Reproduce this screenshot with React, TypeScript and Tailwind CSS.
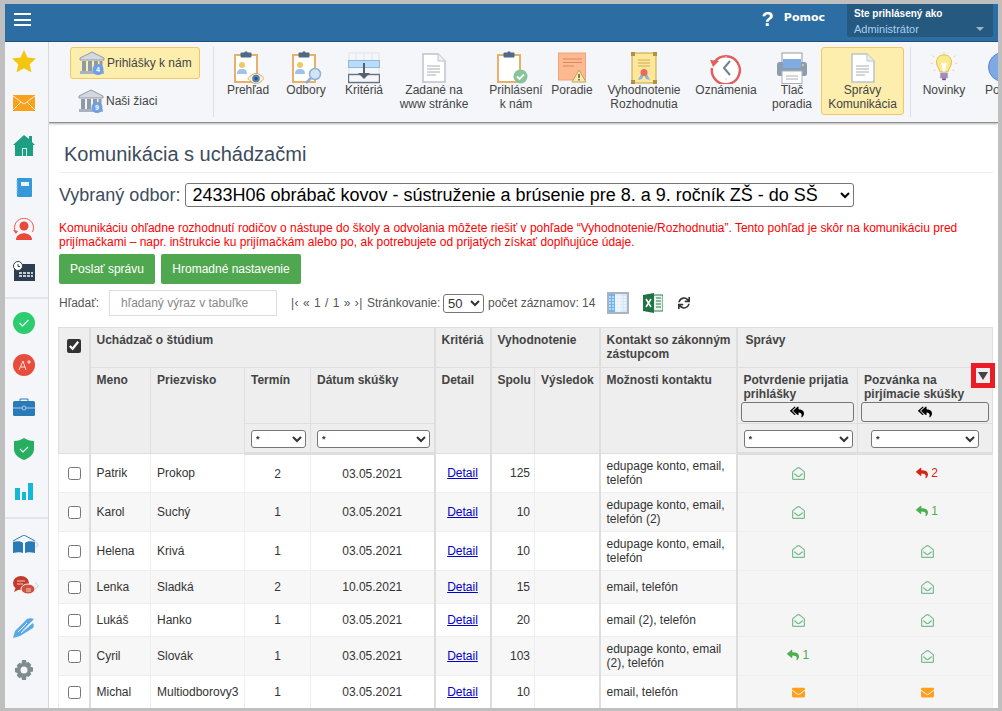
import type { ReactNode } from "react";
import { FaEnvelope, FaRegEnvelopeOpen, FaReply, FaReplyAll, FaSync } from "react-icons/fa";

function Clipboard({ children }: { children?: ReactNode }) {
  return (
    <>
      <rect x="3" y="4" width="22" height="27" fill="#fff" stroke="#e9b06a" strokeWidth="2" />
      <rect x="8.500" y="1.500" width="11" height="5" rx="1" fill="#4f6a85" />
      <circle cx="14" cy="1.800" r="1.600" fill="#4f6a85" />
      {children}
    </>
  );
}

function Person() {
  return (
    <>
      <circle cx="10" cy="14" r="3" fill="#f3c766" />
      <path d="M5 23c0-4 2-5 5-5s5 1 5 5z" fill="#9dc3ec" />
    </>
  );
}

function Prehlad() {
  return (
    <svg width="32" height="33" viewBox="0 0 32 33">
      <Clipboard><Person /></Clipboard>
      <path d="M16 27.500c3-3.500 5-5 8-5s5 1.500 8 5c-3 3.500-5 5-8 5s-5-1.500-8-5z" fill="#fdf2d8" stroke="#d9a860" />
      <circle cx="24" cy="27.500" r="3.800" fill="#4d7fb8" />
      <circle cx="24" cy="27.500" r="1.500" fill="#234d7a" />
    </svg>
  );
}

function Odbory() {
  return (
    <svg width="32" height="33" viewBox="0 0 32 33">
      <Clipboard><Person /></Clipboard>
      <circle cx="25" cy="23" r="5.500" fill="#cfe4f7" stroke="#8fb0cf" strokeWidth="1.500" />
      <path d="M21 27l-5 5" stroke="#8fb0cf" strokeWidth="2.500" />
    </svg>
  );
}

function Kriteria() {
  return (
    <svg width="32" height="32" viewBox="0 0 32 32">
      <rect x="1" y="1" width="30" height="30" fill="#f4f6f9" stroke="#dfe3e8" />
      <path d="M8 1v7M16 1v7M24 1v7" stroke="#dfe3e8" />
      <rect x="0.500" y="8.500" width="31" height="7" fill="#b9dcf8" stroke="#8db8d8" />
      <rect x="0.500" y="22.500" width="31" height="8" fill="#f4f6f9" stroke="#66727e" strokeWidth="1.400" />
      <path d="M16 11v13" stroke="#55616d" strokeWidth="2" />
      <path d="M10 21h12l-6 6z" fill="#55616d" />
    </svg>
  );
}

function Doc() {
  return (
    <svg width="24" height="30" viewBox="0 0 24 30">
      <path d="M1 1h15l7 7v21H1z" fill="#fff" stroke="#bcc3ca" strokeWidth="1.500" />
      <path d="M16 1v7h7" fill="#eef0f2" stroke="#bcc3ca" />
      <path d="M5 13h13M5 16h13M5 19h13M5 22h9" stroke="#a6aeb6" />
    </svg>
  );
}

function Prihlaseni() {
  return (
    <svg width="42" height="33" viewBox="0 0 42 33">
      <Clipboard />
      <circle cx="25.500" cy="25.500" r="7" fill="#87c49a" />
      <path d="M22 25.500l2.500 2.500 4.500-4.500" fill="none" stroke="#fff" strokeWidth="1.800" />
    </svg>
  );
}

function Poradie() {
  return (
    <svg width="29" height="31" viewBox="0 0 29 31">
      <rect x="0.500" y="1" width="27" height="27" fill="#fdb98f" stroke="#eca57c" />
      <path d="M5 7h19M5 10.500h19M5 14h11" stroke="#d98a5c" strokeWidth="1.200" />
      <path d="M21 18l7 12H14z" fill="#fde9a8" stroke="#bfa25a" />
      <path d="M21 22v4M21 27v1.500" stroke="#444" strokeWidth="1.400" />
    </svg>
  );
}

function Diploma() {
  return (
    <svg width="26" height="32" viewBox="0 0 26 32">
      <rect x="1" y="1" width="24" height="30" fill="#fde79b" stroke="#c4a24a" />
      <path d="M0 0h4v4H0zM22 0h4v4h-4zM0 28h4v4H0zM22 28h4v4h-4z" fill="#b3923f" />
      <path d="M7 8h12M7 11h12M7 14h12" stroke="#cfae55" strokeWidth="1.200" />
      <path d="M10 22l-3 6 4-1 2-4 2 4 4 1-3-6z" fill="#8fb5dc" />
      <circle cx="13" cy="20.500" r="3.500" fill="#e66a5e" />
    </svg>
  );
}

function ClockBack() {
  return (
    <svg width="32" height="32" viewBox="0 0 32 32">
      <path d="M4.500 10A14 14 0 1 1 2 16" fill="#fff" stroke="#e25f5f" strokeWidth="2.500" />
      <path d="M0 8l9 1-6 6z" fill="#e25f5f" />
      <path d="M20 9l-6 7 6 7" fill="none" stroke="#6d8197" strokeWidth="2" />
      <path d="M16 4v2M16 26v2M27 16h2" stroke="#c6ced6" />
    </svg>
  );
}

function Printer() {
  return (
    <svg width="32" height="32" viewBox="0 0 32 32">
      <rect x="6" y="1" width="20" height="16" fill="#fff" stroke="#a9b2bb" strokeWidth="1.300" />
      <rect x="1" y="10" width="30" height="14" rx="2.500" fill="#8d9db0" />
      <rect x="7" y="7" width="18" height="9" fill="#80ace4" />
      <circle cx="27" cy="13" r="1" fill="#f3d27a" />
      <rect x="6" y="19" width="20" height="12.500" fill="#fff" stroke="#a9b2bb" />
      <path d="M10 24h12M10 27h12" stroke="#a9b2bb" />
    </svg>
  );
}

function Bulb() {
  return (
    <svg width="28" height="31" viewBox="0 0 28 33">
      <path d="M14 3c-5 0-8 3.500-8 8 0 4 3 6 3.500 10h9c.5-4 3.500-6 3.500-10 0-4.500-3-8-8-8z" fill="#fbe98a" stroke="#dcb94f" />
      <path d="M11 12c1-2 2 1 3 0s2-2 3 0l-2 9h-2z" fill="#fff" />
      <rect x="10" y="22" width="8" height="6" fill="#a48bb8" />
      <rect x="12" y="28" width="4" height="2" fill="#6c5a80" />
      <path d="M14 0v1.500M2 4l2 1.500M26 4l-2 1.500M0 12h2M26 12h2M3 20l2-1M25 20l-2-1" stroke="#ecd27a" />
    </svg>
  );
}

function Bank({ n }: { n: number }) {
  return (
    <svg width="26" height="25" viewBox="0 0 26 25">
      <path d="M1 7l12-6 12 6v2H1z" fill="#d3d9e0" stroke="#8e9aa8" />
      <path d="M3 10h4v10H3zM9 10h4v10H9zM15 10h4v10h-4zM20.500 10h3v10h-3z" fill="#8e9aa8" />
      <rect x="1" y="20" width="24" height="3" fill="#aab3bd" />
      <circle cx="19" cy="18.500" r="5.500" fill="#6ea0e6" />
      <text x="19" y="21" fontSize="7" fontWeight="700" textAnchor="middle" fill="#fff" fontFamily="Liberation Sans">{n}</text>
    </svg>
  );
}

const chevron = <span className="absolute left-[21px] top-[1px] text-[16px] leading-[16px] text-[#d6dade]">›</span>;

const sideA = [
  <svg key="star" width="24" height="22" viewBox="0 0 24 22"><path d="M12 0l3.500 7.600 8.500 1-6.300 5.600 1.800 8.200L12 18.300 4.500 22.400l1.800-8.200L0 8.600l8.500-1z" fill="#f5c60f" /></svg>,
  <svg key="mail" width="22" height="16" viewBox="0 0 22 16"><rect width="22" height="16" fill="#f9a11b" /><path d="M0 1l11 8 11-8M0 15l8-8M22 15l-8-8" fill="none" stroke="#fdf0d5" /></svg>,
  <svg key="home" width="22" height="21" viewBox="0 0 22 21"><path d="M11 0l5 4V1h3v6l3 3h-2v11H2V10H0z" fill="#1e9e82" /><rect x="9" y="13" width="5" height="8" fill="#cdeee6" /><rect x="10" y="14" width="3" height="7" fill="#1e9e82" /></svg>,
  <svg key="note" width="16" height="19" viewBox="0 0 16 19"><rect x="1" y="0" width="15" height="19" rx="1" fill="#3498db" /><rect x="5" y="4" width="8" height="4" fill="#e8f4fc" /><path d="M0 3h2M0 6h2M0 9h2M0 12h2M0 15h2" stroke="#8fc5ea" /></svg>,
  <svg key="person" width="22" height="22" viewBox="0 0 22 22"><path d="M2.500 14A9.500 9.500 0 1 1 19.500 14" fill="none" stroke="#e9594b" /><path d="M0 12l3 4 2-3z" fill="#e9594b" /><circle cx="11" cy="8" r="4.500" fill="#e9483a" /><path d="M3 22c0-5 4-6 8-7 4 1 8 2 8 7z" fill="#e9483a" /></svg>,
  <svg key="cal" width="22" height="20" viewBox="0 0 22 20"><rect x="1" y="3" width="21" height="17" fill="#2c3e50" /><path d="M6 11h3v2H6zM10 11h3v2h-3zM14 11h3v2h-3zM6 14h3v2H6zM10 14h3v2h-3zM14 14h3v2h-3zM18 11h2v2h-2zM18 14h2v2h-2z" fill="#c5ccd3" /><circle cx="5" cy="5" r="4.500" fill="#fff" stroke="#2c3e50" /><path d="M5 3v2.500h2" fill="none" stroke="#2c3e50" /></svg>,
];

const sideB = [
  <svg key="ok" width="22" height="22" viewBox="0 0 22 22"><circle cx="11" cy="11" r="11" fill="#2ecc71" /><path d="M6.500 11l3 3 6-6" fill="none" stroke="#e8fbf0" strokeWidth="1.200" /></svg>,
  <svg key="grade" width="22" height="22" viewBox="0 0 22 22"><circle cx="11" cy="11" r="11" fill="#e74c3c" /><path d="M6 16l4-9 3 9M7.500 13h4.500M14 8h4M16 6v4" fill="none" stroke="#fbe1de" /></svg>,
  <svg key="case" width="22" height="18" viewBox="0 0 22 18"><path d="M7 3V1h8v2" fill="none" stroke="#2a7ab8" /><rect y="3" width="22" height="15" rx="1.500" fill="#2a7ab8" /><path d="M0 10h22" stroke="#a8cce6" /><circle cx="11" cy="10" r="2" fill="#2a7ab8" stroke="#a8cce6" /></svg>,
  <svg key="shield" width="20" height="22" viewBox="0 0 20 22"><path d="M10 0c3 2 6 3 10 3v8c0 6-5 9-10 11C5 20 0 17 0 11V3c4 0 7-1 10-3z" fill="#27ae60" /><path d="M6 11l3 3 5-5" fill="none" stroke="#e8fbf0" strokeWidth="1.200" /></svg>,
  <svg key="bars" width="18" height="17" viewBox="0 0 18 17"><path d="M0 5h5v12H0zM7 9h4v8H7zM13 0h5v17h-5z" fill="#14b8d4" /></svg>,
];

const sideC = [
  <div key="book" className="relative flex items-center justify-center">
    <svg width="22" height="19" viewBox="0 0 22 19"><path d="M0 6l11-6 11 6" fill="none" stroke="#2a7ab8" /><path d="M0 7c4-1 8-1 10 1v10c-2-1-6-1-10 0zM22 7c-4-1-8-1-10 1v10c2-1 6-1 10 0z" fill="#2a7ab8" /></svg>
    {chevron}
  </div>,
  <div key="chat" className="relative flex items-center justify-center">
    <svg width="22" height="20" viewBox="0 0 22 20"><ellipse cx="8" cy="7" rx="8" ry="7" fill="#c0392b" /><path d="M3 11l-2 5 6-3z" fill="#c0392b" /><ellipse cx="15" cy="13" rx="7" ry="5" fill="#d0503f" stroke="#f4f6f9" /><path d="M4 5h8M4 8h6M13 13h5M13 15h5" stroke="#f2c9c3" /></svg>
    {chevron}
  </div>,
  <svg key="pen" width="22" height="20" viewBox="0 0 22 20"><path d="M0 20l2-7L14 1c2-1 5-1 7 0L8 14l12-9c1 2 1 4 0 5L7 18z" fill="#5aa9e6" /><path d="M5 14l9-9M8 15l10-9" stroke="#e8f3fb" /></svg>,
  <svg key="gear" width="20" height="20" viewBox="0 0 20 20"><path d="M8 0h4l.5 2.700 2-.8 2.800 2.800-1 2 2.700.8v4l-2.700.5 1 2.200-2.800 2.800-2-1L12 20H8l-.5-2.700-2 1-2.800-2.800 1-2.200L1 12V8l2.700-.5-1-2 2.800-2.800 2 1z" fill="#7f8c8d" /><circle cx="10" cy="10" r="3.500" fill="#f4f6f9" /></svg>,
];

const tools: { label: ReactNode; icon: ReactNode; cls: string }[] = [
  { label: "Prehľad", icon: <Prehlad />, cls: "w-[58px]" },
  { label: "Odbory", icon: <Odbory />, cls: "w-[58px]" },
  { label: "Kritériá", icon: <Kriteria />, cls: "w-[58px]" },
  { label: <>Zadané na<br />www stránke</>, icon: <Doc />, cls: "w-[82px]" },
  { label: <>Prihlásení<br />k nám</>, icon: <Prihlaseni />, cls: "w-[72px] ml-[5px]" },
  { label: "Poradie", icon: <Poradie />, cls: "w-[40px]" },
  { label: <>Vyhodnotenie<br />Rozhodnutia</>, icon: <Diploma />, cls: "w-[104px]" },
  { label: "Oznámenia", icon: <ClockBack />, cls: "w-[60px]" },
  { label: <>Tlač<br />poradia</>, icon: <Printer />, cls: "w-[58px] ml-[7px]" },
];

type Msg = "open" | "mail" | "none" | "red2" | "green1";

const rows: { name: string; last: string; term: number; date: string; total: number; contact: ReactNode; a: Msg; b: Msg; tall: boolean }[] = [
  { name: "Patrik", last: "Prokop", term: 2, date: "03.05.2021", total: 125, contact: <>edupage konto, email,<br />telefón</>, a: "open", b: "red2", tall: true },
  { name: "Karol", last: "Suchý", term: 1, date: "03.05.2021", total: 10, contact: <>edupage konto, email,<br />telefón (2)</>, a: "open", b: "green1", tall: true },
  { name: "Helena", last: "Krivá", term: 1, date: "03.05.2021", total: 10, contact: <>edupage konto, email,<br />telefón</>, a: "open", b: "open", tall: true },
  { name: "Lenka", last: "Sladká", term: 2, date: "10.05.2021", total: 15, contact: "email, telefón", a: "none", b: "open", tall: false },
  { name: "Lukáš", last: "Hanko", term: 1, date: "03.05.2021", total: 20, contact: "email (2), telefón", a: "open", b: "open", tall: false },
  { name: "Cyril", last: "Slovák", term: 1, date: "03.05.2021", total: 103, contact: <>edupage konto, email<br />(2), telefón</>, a: "green1", b: "open", tall: true },
  { name: "Michal", last: "Multiodborovy3", term: 1, date: "03.05.2021", total: 10, contact: "email, telefón", a: "mail", b: "mail", tall: false },
];

function MsgCell({ kind }: { kind: Msg }) {
  if (kind === "none") return null;
  if (kind === "open") return <FaRegEnvelopeOpen className="mx-auto text-[13px] text-[#77bd8f]" />;
  if (kind === "mail") return <FaEnvelope className="mx-auto text-[13px] text-[#ff9f1c]" />;
  const red = kind === "red2";
  return (
    <span className={red ? "inline-flex items-center gap-[3px] text-[#d9230f]" : "inline-flex items-center gap-[3px] text-[#4caf50]"}>
      <FaReply className="text-[12px]" />
      {red ? "2" : "1"}
    </span>
  );
}

const th = "border border-[#dedede] bg-[#eee] px-[6px] align-top text-left font-bold leading-[14px] text-[#444]";
const td = "border border-[#eee] py-0 align-middle";
const smallSelect = "block h-[18px] rounded-[3px] border border-[#767676] bg-white text-[9px] text-[#333]";
const replyBtn = "-ml-[3px] mt-px flex h-[20px] w-[calc(100%+6px)] items-center justify-center rounded-[3px] border border-[#767676] bg-[#efefef] text-[14px] text-black";

export default function App() {
  return (
    <div className="h-[711px] w-[1002px] overflow-hidden bg-[#bfbfbf] pb-[3px] pl-[5px] pr-[4px] pt-[4px] font-['Liberation_Sans',Arial,sans-serif] text-[12px] text-[#333]">
      <div className="flex h-full flex-col overflow-hidden bg-white">
        {/* Top bar */}
        <header className="flex h-[38px] shrink-0 items-start border-b border-[#1e5078] bg-[#2c6ea3] pr-[5px] text-white">
          <div className="ml-[9px] mt-[9px] flex w-[17px] flex-col gap-[3.5px]">
            <span className="h-[2px] bg-white" />
            <span className="h-[2px] bg-white" />
            <span className="h-[2px] bg-white" />
          </div>
          <span className="ml-auto mt-[4px] text-[20px] font-bold leading-[22px]">?</span>
          <span className="ml-[10px] mt-[6px] font-['DejaVu_Sans',sans-serif] text-[11px] font-bold leading-[16px]">Pomoc</span>
          <div className="relative ml-[22px] h-[33px] w-[146px] rounded-b-[2px] bg-[#25597f] pl-[7px] pt-[4px]">
            <div className="text-[10px] font-bold leading-[12px]">Ste prihlásený ako</div>
            <div className="mt-[3px] text-[11px] leading-[12px] text-[#a5d0f2]">Administrátor</div>
            <span className="absolute bottom-[6px] right-[9px] h-0 w-0 border-x-[4px] border-t-[4px] border-x-transparent border-t-[#9db4c6]" />
          </div>
        </header>

        <div className="flex min-h-0 flex-1">
          {/* Sidebar */}
          <aside className="w-[44px] shrink-0 border-r border-[#d5d8dc] bg-[#f4f6f9]">
            <div className="-mt-[2px] border-b-2 border-[#e1e4e8] pb-[5px]">
              {sideA.map((ic, i) => <div key={i} className="flex h-[42px] items-center justify-center pr-[5px]">{ic}</div>)}
            </div>
            <div className="border-b-2 border-[#e1e4e8] pb-[5px] pt-[3px]">
              {sideB.map((ic, i) => <div key={i} className="flex h-[42px] items-center justify-center pr-[5px]">{ic}</div>)}
            </div>
            <div className="pt-[4px]">
              {sideC.map((ic, i) => <div key={i} className="flex h-[42px] items-center justify-center pr-[5px]">{ic}</div>)}
            </div>
          </aside>

          <main className="min-w-0 flex-1 overflow-hidden">
            {/* Toolbar */}
            <div className="relative flex h-[81px] overflow-hidden border-b border-[#8f8f8f] bg-[#f4f6f9] pt-[5px] leading-[14px] text-[#444] shadow-[0_1px_2px_rgba(0,0,0,0.3)]">
              <div className="ml-[21px] w-[130px] shrink-0">
                <div className="flex h-[32px] items-center rounded-[3px] border border-[#f3c95f] bg-[#fdeeae] pl-[8px]">
                  <Bank n={4} />
                  <span className="ml-[2px]">Prihlášky k nám</span>
                </div>
                <div className="mt-[6px] flex h-[32px] items-center pl-[8px]">
                  <Bank n={9} />
                  <span className="ml-[2px]">Naši žiaci</span>
                </div>
              </div>
              <div className="ml-[13px] mr-[5px] h-[70px] w-px shrink-0 bg-[#dcdfe3]" />
              {tools.map((t, i) => (
                <div key={i} className={`flex shrink-0 flex-col items-center pt-[5px] text-center ${t.cls}`}>
                  <div className="flex h-[31px] items-center">{t.icon}</div>
                  <div className="whitespace-nowrap">{t.label}</div>
                </div>
              ))}
              <div className="flex h-[68px] w-[83px] shrink-0 flex-col items-center rounded-[3px] border border-[#f3c95f] bg-[#fdeeae] pt-[4px] text-center">
                <div className="flex h-[31px] items-center"><Doc /></div>
                <div className="whitespace-nowrap">Správy<br />Komunikácia</div>
              </div>
              <div className="ml-[6px] h-[70px] w-px shrink-0 bg-[#dcdfe3]" />
              <div className="flex w-[66px] shrink-0 flex-col items-center pt-[5px]">
                <div className="flex h-[31px] items-center"><Bulb /></div>
                <div>Novinky</div>
              </div>
              <div className="flex shrink-0 flex-col pl-[8px] pt-[5px]">
                <div className="ml-[3px] h-[30px] w-[30px] rounded-full border border-[#5d88c9] bg-[#7fa8e6]" />
                <div className="mt-px">Po</div>
              </div>
            </div>

            {/* Content */}
            <div className="pl-[10px] pr-[5px]">
              <h1 className="border-b border-[#eee] pb-[6px] pl-[5px] pt-[19px] text-[20px] font-normal leading-[24px] text-[#3c4c5e]">Komunikácia s uchádzačmi</h1>
              <div className="mt-[10px] flex h-[24px] items-center text-[18px] text-[#3c4c5e]">
                <span>Vybraný odbor:</span>
                <select className="ml-[5px] h-[24px] w-[669px] rounded-[3px] border border-[#767676] bg-white pl-[2px] text-[18px] text-black">
                  <option>2433H06 obrábač kovov - sústruženie a brúsenie pre 8. a 9. ročník ZŠ - do SŠ</option>
                </select>
              </div>
              <p className="mt-[14px] leading-[14px] text-[#f00]">
                Komunikáciu ohľadne rozhodnutí rodičov o nástupe do školy a odvolania môžete riešiť v pohľade “Vyhodnotenie/Rozhodnutia”. Tento pohľad je skôr na komunikáciu pred prijímačkami – napr. inštrukcie ku prijímačkám alebo po, ak potrebujete od prijatých získať doplňujúce údaje.
              </p>
              <div className="mt-[5px] flex gap-[6px]">
                <button className="h-[30px] w-[96px] rounded-[2px] bg-[#4fa84f] text-white">Poslať správu</button>
                <button className="h-[30px] w-[140px] rounded-[2px] bg-[#4fa84f] text-white">Hromadné nastavenie</button>
              </div>
              <div className="mt-[6px] flex h-[26px] items-center text-[#555]">
                <span className="w-[50px]">Hľadať:</span>
                <input className="h-[26px] w-[168px] border border-[#ddd] bg-white pl-[11px] placeholder:text-[#888]" placeholder="hľadaný výraz v tabuľke" />
                <span className="ml-[14px] w-[76px] whitespace-nowrap tracking-[0.5px]">|‹ « 1 / 1 » ›|</span>
                <span className="w-[76px]">Stránkovanie:</span>
                <select className="h-[19px] w-[41px] rounded-[3px] border border-[#767676] bg-white text-[13px] text-[#333]">
                  <option>50</option>
                </select>
                <span className="ml-[4px] w-[119px] whitespace-nowrap">počet záznamov: 14</span>
                <svg width="22" height="22" viewBox="0 0 22 22">
                  <rect width="22" height="22" fill="#aab4be" />
                  <rect x="2" y="2" width="6" height="18" fill="#6fb3f5" />
                  <rect x="8" y="2" width="6" height="18" fill="#e6f1fb" />
                  <rect x="14" y="2" width="6" height="18" fill="#d5e6f6" />
                  <path d="M2 5h18M2 8h18M2 11h18M2 14h18M2 17h18" stroke="#fff" strokeDasharray="2 1" />
                </svg>
                <svg className="ml-[14px]" width="20" height="20" viewBox="0 0 20 20">
                  <rect x="7" y="2" width="13" height="16" fill="#e8f3ec" stroke="#2e7d4f" />
                  <path d="M13 5h5M13 8h5M13 11h5M13 14h5" stroke="#2e7d4f" />
                  <path d="M0 2l11-2v20L0 18z" fill="#217346" />
                  <path d="M3 6l5 8M8 6l-5 8" stroke="#fff" strokeWidth="1.500" />
                </svg>
                <FaSync className="ml-[15px] text-[12px] text-[#333]" />
              </div>

              {/* Table */}
              <table className="-ml-px mt-[11px] w-[934px] table-fixed border-collapse">
                <colgroup>
                  <col className="w-[31px]" />
                  <col className="w-[61px]" />
                  <col className="w-[94px]" />
                  <col className="w-[66px]" />
                  <col className="w-[124px]" />
                  <col className="w-[56px]" />
                  <col className="w-[44px]" />
                  <col className="w-[65px]" />
                  <col className="w-[137px]" />
                  <col className="w-[121px]" />
                  <col className="w-[135px]" />
                </colgroup>
                <thead>
                  <tr className="h-[40px]">
                    <th rowSpan={3} className={`${th} border-r-2 pl-[8px] pt-[11px]`}>
                      <input type="checkbox" defaultChecked className="block h-[14px] w-[14px] accent-[#333]" />
                    </th>
                    <th colSpan={4} className={`${th} border-r-2 pt-[5px]`}>Uchádzač o štúdium</th>
                    <th className={`${th} border-r-2 pt-[5px]`}>Kritériá</th>
                    <th colSpan={2} className={`${th} border-r-2 pt-[5px]`}>Vyhodnotenie</th>
                    <th className={`${th} border-r-2 whitespace-nowrap pt-[5px]`}>Kontakt so zákonným<br />zástupcom</th>
                    <th colSpan={2} className={`${th} pl-[8px] pt-[5px]`}>Správy</th>
                  </tr>
                  <tr className="h-[56px]">
                    <th rowSpan={2} className={`${th} pt-[5px]`}>Meno</th>
                    <th rowSpan={2} className={`${th} pt-[5px]`}>Priezvisko</th>
                    <th className={`${th} pt-[5px]`}>Termín</th>
                    <th className={`${th} border-r-2 pt-[5px]`}>Dátum skúšky</th>
                    <th rowSpan={2} className={`${th} border-r-2 pt-[5px]`}>Detail</th>
                    <th rowSpan={2} className={`${th} pt-[5px]`}>Spolu</th>
                    <th rowSpan={2} className={`${th} border-r-2 pt-[5px]`}>Výsledok</th>
                    <th rowSpan={2} className={`${th} border-r-2 pt-[5px]`}>Možnosti kontaktu</th>
                    <th className={`${th} whitespace-nowrap pt-[5px]`}>
                      Potvrdenie prijatia<br />prihlášky
                      <button className={replyBtn}><FaReplyAll /></button>
                    </th>
                    <th className={`relative ${th} whitespace-nowrap pt-[5px]`}>
                      Pozvánka na<br />pirjímacie skúšky
                      <button className={replyBtn}><FaReplyAll /></button>
                      <span className="absolute right-[-3px] top-[-5px] flex h-[25px] w-[24px] items-center justify-center border-[5px] border-[#ed1c24] bg-[#eee]">
                        <span className="h-0 w-0 border-x-[5px] border-t-[8px] border-x-transparent border-t-[#444]" />
                      </span>
                    </th>
                  </tr>
                  <tr className="h-[30px]">
                    <th className={`${th} border-b-[3px] pt-[6px]`}>
                      <select className={`${smallSelect} w-[55px]`}><option>*</option></select>
                    </th>
                    <th className={`${th} border-b-[3px] border-r-2 pt-[6px]`}>
                      <select className={`${smallSelect} w-[113px]`}><option>*</option></select>
                    </th>
                    <th className={`${th} border-b-[3px] pt-[6px]`}>
                      <select className={`${smallSelect} w-[109px]`}><option>*</option></select>
                    </th>
                    <th className={`${th} border-b-[3px] pt-[6px]`}>
                      <select className={`${smallSelect} ml-[7px] w-[108px]`}><option>*</option></select>
                    </th>
                  </tr>
                </thead>
                <tbody>
                  {rows.map((r, i) => {
                    const bg = i % 2 ? "bg-[#f7f7f7]" : "bg-white";
                    return (
                      <tr key={r.name} className={`${bg} ${r.tall ? "h-[39px]" : "h-[33px]"}`}>
                        <td className={`${td} border-r-2 border-r-[#ddd] pl-[9px]`}>
                          <input type="checkbox" className="block h-[13px] w-[13px]" />
                        </td>
                        <td className={`${td} px-[6px]`}>{r.name}</td>
                        <td className={`${td} whitespace-nowrap px-[6px]`}>{r.last}</td>
                        <td className={`${td} px-[6px] text-center`}>{r.term}</td>
                        <td className={`${td} border-r-2 border-r-[#ddd] px-[6px] text-center`}>{r.date}</td>
                        <td className={`${td} border-r-2 border-r-[#ddd] px-[6px] text-center`}><a href="#" className="text-[#00c] underline">Detail</a></td>
                        <td className={`${td} pl-[6px] pr-[4px] text-right`}>{r.total}</td>
                        <td className={`${td} border-r-2 border-r-[#ddd] px-[6px]`} />
                        <td className={`${td} border-r-2 border-r-[#ddd] px-[6px] leading-[14px]`}>{r.contact}</td>
                        <td className={`${td} bg-[#f5f5f5] pl-[8px] pr-[6px] text-center`}><MsgCell kind={r.a} /></td>
                        <td className={`${td} bg-[#f5f5f5] pl-[10px] pr-[6px] text-center`}><MsgCell kind={r.b} /></td>
                      </tr>
                    );
                  })}
                </tbody>
              </table>
            </div>
          </main>
        </div>
      </div>
    </div>
  );
}
